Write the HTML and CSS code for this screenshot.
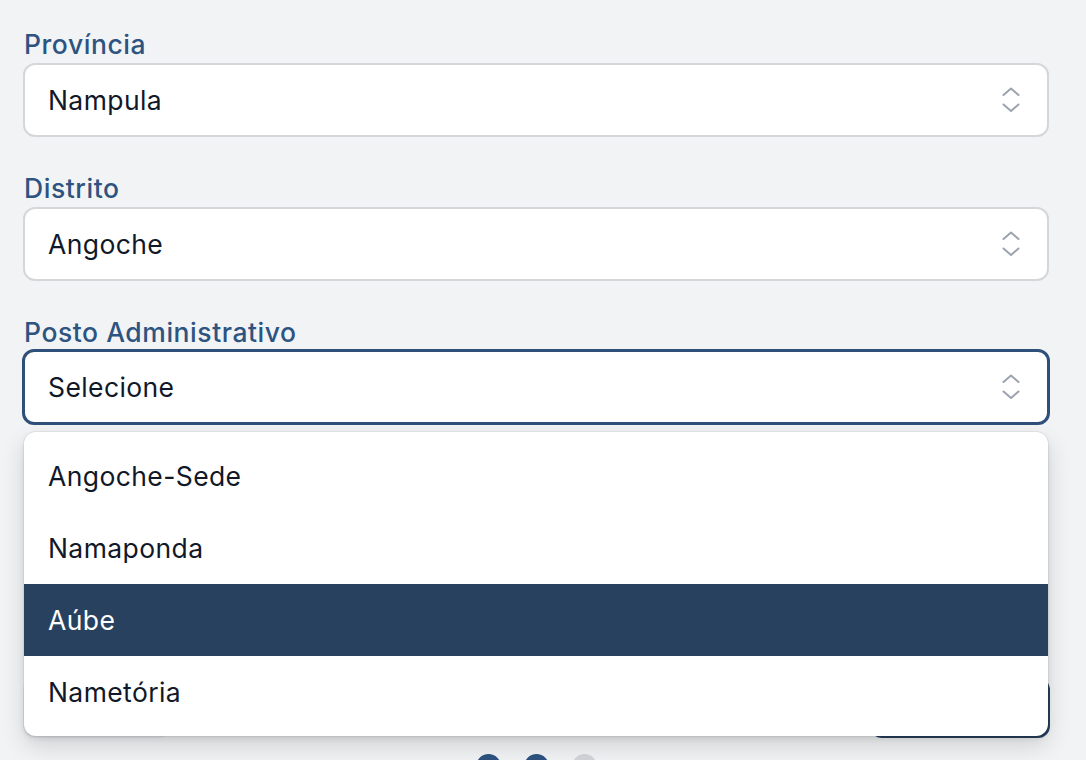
FILE: index.html
```html
<!DOCTYPE html>
<html lang="pt">
<head>
<meta charset="utf-8">
<title>Localização</title>
<link rel="stylesheet" href="styles.css">
</head>
<body>
<main class="form">
  <div class="field">
    <label class="label">Província</label>
    <div class="select">
      <span class="value">Nampula</span>
      <svg class="chev" width="18" height="26" viewBox="0 0 18 26"><path d="M1.5 8 L9 1.5 L16.5 8 M1.5 17.5 L9 24 L16.5 17.5" fill="none" stroke="#9ca3af" stroke-width="2" stroke-linecap="round" stroke-linejoin="round"/></svg>
    </div>
  </div>
  <div class="field">
    <label class="label">Distrito</label>
    <div class="select">
      <span class="value">Angoche</span>
      <svg class="chev" width="18" height="26" viewBox="0 0 18 26"><path d="M1.5 8 L9 1.5 L16.5 8 M1.5 17.5 L9 24 L16.5 17.5" fill="none" stroke="#9ca3af" stroke-width="2" stroke-linecap="round" stroke-linejoin="round"/></svg>
    </div>
  </div>
  <div class="field field-open">
    <label class="label">Posto Administrativo</label>
    <div class="select select-focus">
      <span class="value">Selecione</span>
      <svg class="chev" width="18" height="26" viewBox="0 0 18 26"><path d="M1.5 8 L9 1.5 L16.5 8 M1.5 17.5 L9 24 L16.5 17.5" fill="none" stroke="#9ca3af" stroke-width="2" stroke-linecap="round" stroke-linejoin="round"/></svg>
    </div>
    <ul class="menu">
      <li class="option">Angoche-Sede</li>
      <li class="option">Namaponda</li>
      <li class="option option-active">Aúbe</li>
      <li class="option">Nametória</li>
    </ul>
  </div>
  <div class="spacer"></div>
  <div class="actions">
    <button class="btn btn-back" aria-label="Voltar"></button>
    <button class="btn btn-next" aria-label="Próximo"></button>
  </div>
  <div class="dots">
    <span class="dot dot-on"></span>
    <span class="dot dot-on"></span>
    <span class="dot"></span>
  </div>
</main>
</body>
</html>
```
FILE: styles.css
```css
* { box-sizing: border-box; }
html, body { margin: 0; padding: 0; }
body {
  background: #f2f3f5;
  font-family: Inter, "Noto Sans", "Liberation Sans", sans-serif;
  color: #111827;
  height: 760px;
  overflow: hidden;
}
.form {
  display: flex;
  flex-direction: column;
  padding: 29px 37px 0 23px;
}
.field {
  display: flex;
  flex-direction: column;
  gap: 4px;
  margin-bottom: 36px;
}
.field-open { position: relative; margin-bottom: 0; }
.label {
  font-size: 26.5px;
  line-height: 30px;
  color: #2d5381;
  font-weight: 500;
  letter-spacing: 0.55px;
  padding-left: 1px;
}
.select {
  height: 74px;
  background: #fff;
  border: 2px solid #d4d6da;
  border-radius: 12px;
  display: flex;
  align-items: center;
  justify-content: space-between;
  padding: 0 27px 0 23px;
}
.select-focus {
  height: 76px;
  margin: -2px -1px 0 -1px;
  border: 3px solid #2f5078;
  padding: 0 27px 0 23px;
}
.value { font-size: 26.5px; line-height: 30px; letter-spacing: 0.4px; }
.chev { display: block; margin-top: -1px; }
.menu {
  position: absolute;
  left: 1px;
  right: 1px;
  top: calc(100% + 7px);
  margin: 0;
  padding: 8px 0;
  list-style: none;
  background: #fff;
  border-radius: 12px;
  box-shadow: 0 0 0 1px rgba(0,0,0,0.05), 0 10px 24px rgba(0,0,0,0.14), 0 3px 6px rgba(0,0,0,0.08);
  z-index: 5;
}
.option {
  height: 72px;
  display: flex;
  align-items: center;
  padding-left: 24px;
  font-size: 26.5px;
  letter-spacing: 0.4px;
  color: #111827;
}
.option-active { background: #28415f; color: #fff; }
.spacer { height: 253px; }
.actions {
  display: flex;
  justify-content: space-between;
  margin-right: -1px;
}
.btn {
  height: 60px;
  border: none;
  border-radius: 12px;
}
.btn-back { width: 148px; background: #e5e7eb; }
.btn-next { width: 180px; background: #28415f; }
.dots {
  display: flex;
  justify-content: center;
  gap: 23px;
  margin-top: 16px;
}
.dot { width: 25px; height: 25px; border-radius: 50%; background: #d1d5db; }
.dot-on { background: #2d5381; }
```
